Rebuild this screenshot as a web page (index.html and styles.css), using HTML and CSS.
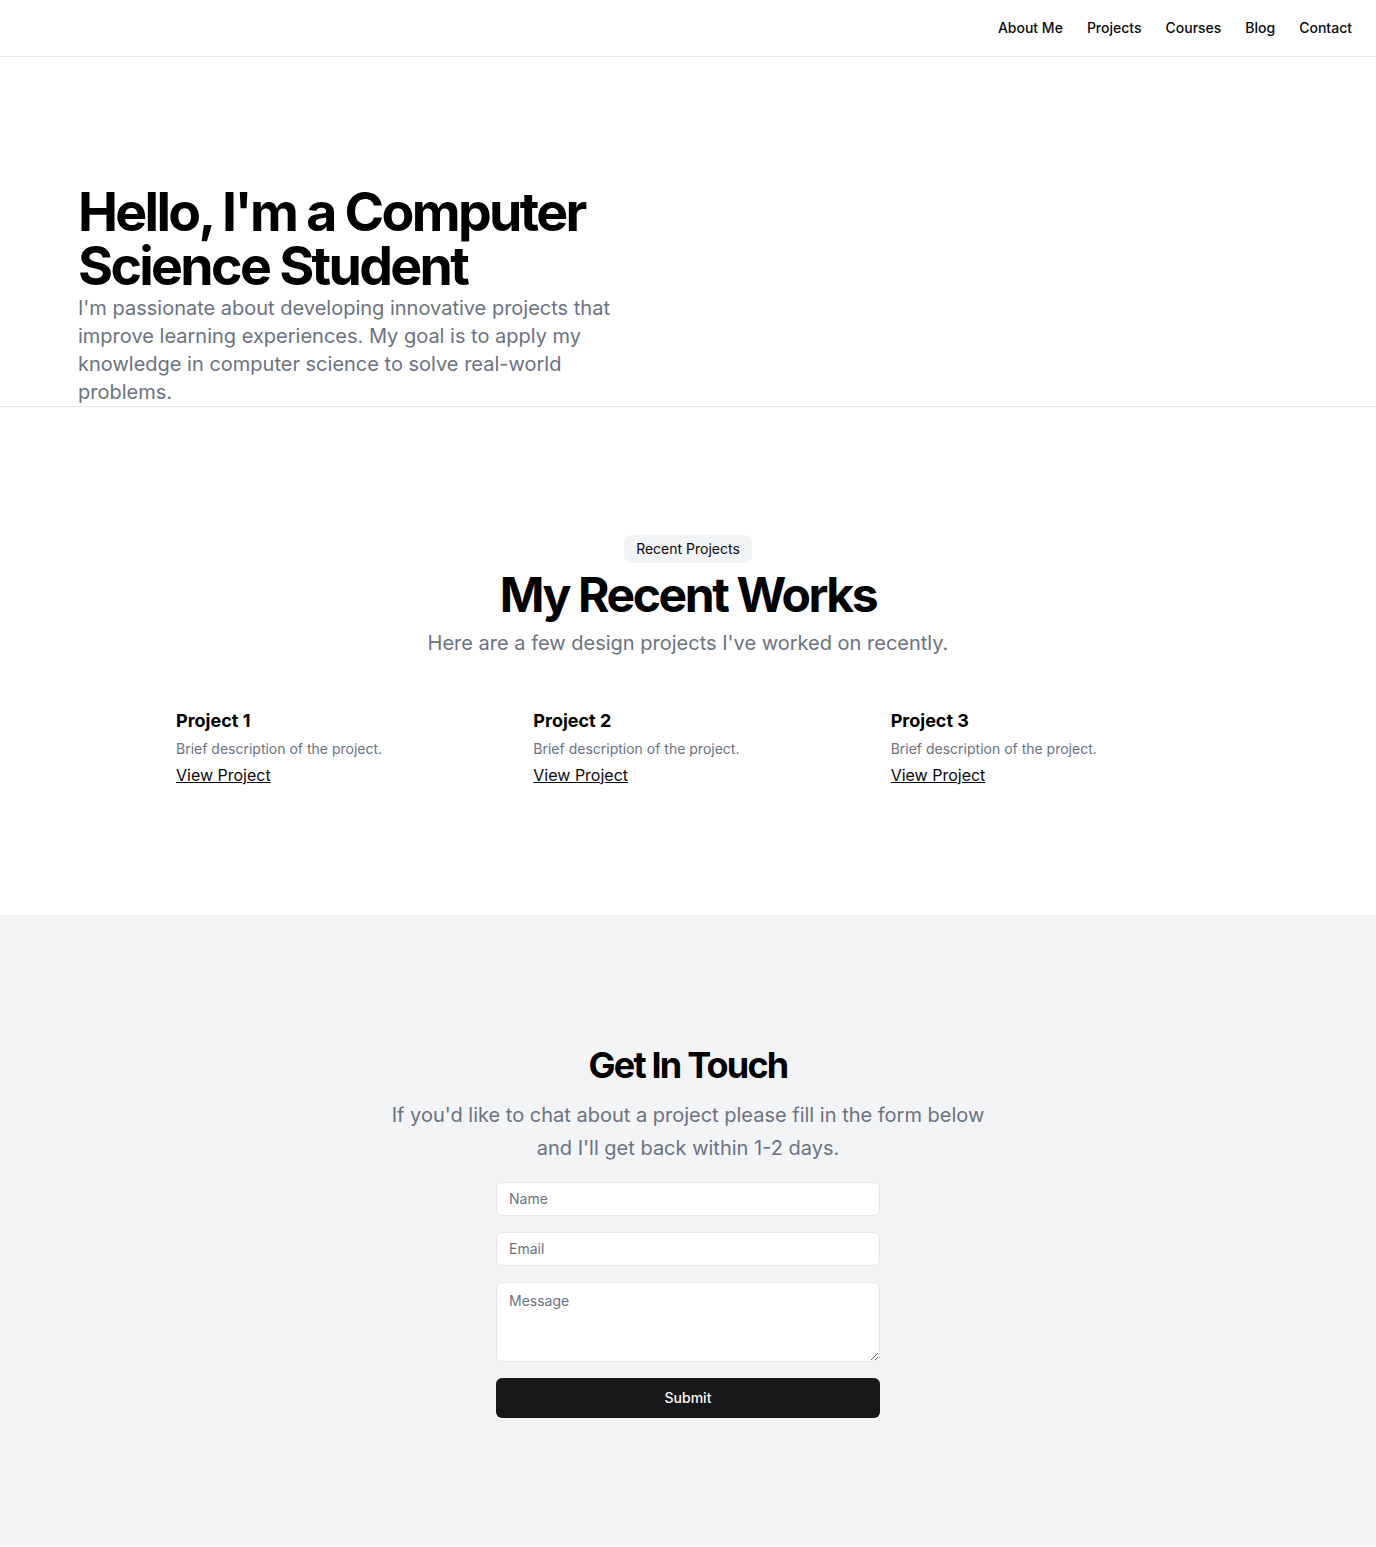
FILE: index.html
```html
<!DOCTYPE html>
<html lang="en">
<head>
<meta charset="utf-8">
<title>Computer Science Student</title>
<link rel="stylesheet" href="styles.css">
</head>
<body>
<header class="site-header">
  <nav class="nav">
    <a href="#" class="nav-link">About Me</a>
    <a href="#" class="nav-link">Projects</a>
    <a href="#" class="nav-link">Courses</a>
    <a href="#" class="nav-link">Blog</a>
    <a href="#" class="nav-link">Contact</a>
  </nav>
</header>
<main>
  <section class="hero">
    <div class="hero-text">
      <h1 class="hero-title">Hello, I'm a Computer Science Student</h1>
      <p class="hero-lead">I'm passionate about developing innovative projects that improve learning experiences. My goal is to apply my knowledge in computer science to solve real-world problems.</p>
    </div>
  </section>
  <section class="works">
    <div class="works-head">
      <span class="badge">Recent Projects</span>
      <h2 class="works-title">My Recent Works</h2>
      <p class="works-sub">Here are a few design projects I've worked on recently.</p>
    </div>
    <div class="works-grid">
      <div class="project">
        <h3 class="project-title">Project 1</h3>
        <p class="project-desc">Brief description of the project.</p>
        <a href="#" class="project-link">View Project</a>
      </div>
      <div class="project">
        <h3 class="project-title">Project 2</h3>
        <p class="project-desc">Brief description of the project.</p>
        <a href="#" class="project-link">View Project</a>
      </div>
      <div class="project">
        <h3 class="project-title">Project 3</h3>
        <p class="project-desc">Brief description of the project.</p>
        <a href="#" class="project-link">View Project</a>
      </div>
    </div>
  </section>
  <section class="contact">
    <h2 class="contact-title">Get In Touch</h2>
    <p class="contact-sub">If you'd like to chat about a project please fill in the form below and I'll get back within 1-2 days.</p>
    <form class="contact-form">
      <input class="field" type="text" placeholder="Name">
      <input class="field" type="email" placeholder="Email">
      <textarea class="field field-area" placeholder="Message"></textarea>
      <button class="submit" type="submit">Submit</button>
    </form>
  </section>
</main>
</body>
</html>
```
FILE: styles.css
```css
* { box-sizing: border-box; }
html, body { margin: 0; padding: 0; }
body {
  font-family: Inter, "Noto Sans", sans-serif;
  color: #09090b;
  background: #ffffff;
}
h1, h2, h3, p { margin: 0; }
a { color: inherit; }

.site-header {
  height: 57px;
  border-bottom: 1px solid #e5e7eb;
  display: flex;
  align-items: center;
  justify-content: flex-end;
  padding: 0 24px;
}
.nav { display: flex; gap: 24px; }
.nav-link {
  font-size: 14px;
  font-weight: 500;
  text-decoration: none;
  color: #09090b;
  line-height: 20px;
}

.hero {
  padding: 128px 78px 0;
  border-bottom: 1px solid #e5e7eb;
}
.hero-text { max-width: 560px; display: flex; flex-direction: column; }
.hero-title {
  font-size: 53.6px;
  line-height: 1;
  font-weight: 700;
  letter-spacing: -0.05em;
  color: #000;
}
.hero-lead {
  margin-top: 2px;
  font-size: 20px;
  line-height: 28px;
  color: #6b7280;
}

.works { padding: 128px 0; }
.works-head {
  display: flex;
  flex-direction: column;
  align-items: center;
  text-align: center;
}
.badge {
  display: inline-block;
  background: #f3f4f6;
  border-radius: 8px;
  padding: 4px 12px;
  font-size: 14px;
  line-height: 20px;
}
.works-title {
  margin-top: 8px;
  font-size: 48px;
  line-height: 1;
  font-weight: 700;
  letter-spacing: -0.05em;
  color: #000;
}
.works-sub {
  margin-top: 8px;
  font-size: 20px;
  line-height: 1.625;
  color: #6b7280;
}
.works-grid {
  max-width: 1024px;
  margin: 47px auto 0;
  display: grid;
  grid-template-columns: repeat(3, 1fr);
  gap: 48px;
}
.project { display: flex; flex-direction: column; align-items: flex-start; gap: 4px; }
.project-title { font-size: 18px; line-height: 28px; font-weight: 700; color: #000; }
.project-desc { font-size: 14px; line-height: 20px; color: #6b7280; }
.project-link { font-size: 16px; line-height: 24px; text-decoration: underline; color: #09090b; }

.contact {
  background: #f3f4f6;
  padding: 130px 0 128px;
  display: flex;
  flex-direction: column;
  align-items: center;
  text-align: center;
}
.contact-title {
  font-size: 36px;
  line-height: 40px;
  font-weight: 700;
  letter-spacing: -0.05em;
  color: #000;
}
.contact-sub {
  margin-top: 14px;
  max-width: 600px;
  font-size: 20px;
  line-height: 33px;
  color: #6b7280;
}
.contact-form {
  margin-top: 17px;
  width: 384px;
  display: flex;
  flex-direction: column;
  gap: 16px;
}
.field {
  display: block;
  width: 100%;
  height: 34px;
  border: 1px solid #e5e7eb;
  border-radius: 6px;
  background: #fff;
  padding: 0 12px;
  font-family: Inter, "Noto Sans", sans-serif;
  font-size: 14px;
  color: #09090b;
}
.field::placeholder { color: #6b7280; }
.field-area {
  height: 80px;
  padding: 8px 12px;
  resize: vertical;
  line-height: 20px;
}
.submit {
  height: 40px;
  border: none;
  border-radius: 6px;
  background: #18181b;
  color: #fafafa;
  font-family: Inter, "Noto Sans", sans-serif;
  font-size: 14px;
  font-weight: 500;
}
```
